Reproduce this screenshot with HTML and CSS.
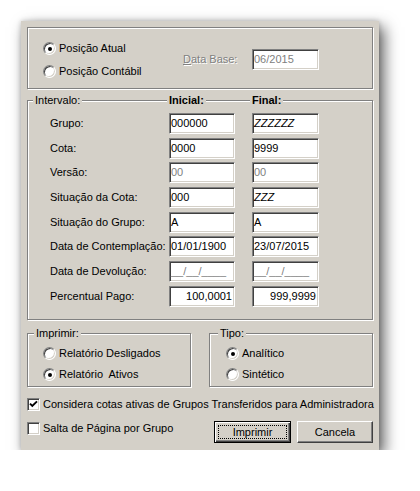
FILE: index.html
```html
<!DOCTYPE html>
<html lang="pt">
<head>
<meta charset="utf-8">
<title>Relatório</title>
<link rel="stylesheet" href="styles.css">
</head>
<body>
<div class="dialog">
  <div class="group g-pos">
    <div class="radios pos-radios">
      <label class="opt"><span class="radio on"></span>Posição Atual</label>
      <label class="opt"><span class="radio"></span>Posição Contábil</label>
    </div>
    <span class="etched"><u>D</u>ata Base:</span>
    <span class="field gray">06/2015</span>
  </div>

  <div class="group g-int">
    <div class="cap-row int-caps">
      <span class="cap c-int">Intervalo:</span>
      <span class="cap bold">Inicial:</span>
      <span class="cap bold">Final:</span>
    </div>
    <div class="int-rows">
      <span class="lbl">Grupo:</span><span class="field ini">000000</span><span class="field it">ZZZZZZ</span>
      <span class="lbl">Cota:</span><span class="field ini">0000</span><span class="field">9999</span>
      <span class="lbl">Versão:</span><span class="field ini gray">00</span><span class="field gray">00</span>
      <span class="lbl">Situação da Cota:</span><span class="field ini">000</span><span class="field it">ZZZ</span>
      <span class="lbl">Situação do Grupo:</span><span class="field ini">A</span><span class="field">A</span>
      <span class="lbl">Data de Contemplação:</span><span class="field ini">01/01/1900</span><span class="field">23/07/2015</span>
      <span class="lbl">Data de Devolução:</span><span class="field ini gray">__/__/____</span><span class="field gray">__/__/____</span>
      <span class="lbl">Percentual Pago:</span><span class="field ini right">100,0001</span><span class="field right">999,9999</span>
    </div>
  </div>

  <div class="bottom-groups">
    <div class="group g-small">
      <div class="cap-row"><span class="cap c-imp">Imprimir:</span></div>
      <div class="radios small-radios r-imp">
        <label class="opt"><span class="radio"></span>Relatório Desligados</label>
        <label class="opt"><span class="radio on"></span>Relatório  Ativos</label>
      </div>
    </div>
    <div class="group g-small">
      <div class="cap-row"><span class="cap c-tipo">Tipo:</span></div>
      <div class="radios small-radios r-tipo">
        <label class="opt"><span class="radio on"></span>Analítico</label>
        <label class="opt"><span class="radio"></span>Sintético</label>
      </div>
    </div>
  </div>

  <label class="opt chk-row"><span class="chk"><svg viewBox="0 0 11 11" width="11" height="11"><path d="M2 4.6 L4.3 7 L9 2.3" fill="none" stroke="#000" stroke-width="1.9"/></svg></span>Considera cotas ativas de Grupos Transferidos para Administradora</label>

  <div class="bottom-row">
    <label class="opt chk-row2"><span class="chk"></span>Salta de Página por Grupo</label>
    <button class="btn default" type="button">Imprimir</button>
    <button class="btn" type="button">Cancela</button>
  </div>
</div>
</body>
</html>
```
FILE: styles.css
```css
body {
  margin: 0;
  background: #fff;
  font-family: "Liberation Sans", Arial, sans-serif;
  font-size: 11px;
  color: #000;
}

.dialog {
  margin: 21px 0 0 21px;
  width: 358px;
  height: 429px;
  box-sizing: border-box;
  background: #d4d0c8;
  padding: 6px;
  box-shadow: 5px 6px 14px rgba(0, 0, 0, 0.62), 0 0 5px rgba(0, 0, 0, 0.2);
}

.group {
  box-sizing: border-box;
  border: 1px solid #808080;
  box-shadow: 1px 1px 0 #fff, inset 1px 1px 0 #fff;
}

/* posição */
.g-pos {
  height: 62px;
  display: flex;
  align-items: flex-start;
  padding: 14px 0 0 15px;
}

.radios {
  display: flex;
  flex-direction: column;
}

.pos-radios {
  width: 140px;
  gap: 10px;
}

.opt {
  display: flex;
  align-items: center;
  gap: 3px;
  height: 13px;
  line-height: 13px;
  white-space: pre;
}

.radio {
  box-sizing: border-box;
  width: 13px;
  height: 13px;
  flex: none;
  border-radius: 50%;
  border: 1px solid;
  border-color: #808080 #fff #fff #808080;
  box-shadow: inset 1px 1px 0 #404040, inset -1px -1px 0 #d4d0c8;
  background: #fff;
  display: flex;
  align-items: center;
  justify-content: center;
}

.radio.on::after {
  content: "";
  width: 4px;
  height: 4px;
  border-radius: 50%;
  background: #000;
}

.etched {
  width: 69px;
  margin-top: 7px;
  line-height: 21px;
  color: #808080;
  text-shadow: 1px 1px 0 #fff;
}

.field {
  box-sizing: border-box;
  display: block;
  width: 67px;
  height: 21px;
  background: #fff;
  border: 1px solid;
  border-color: #808080 #fff #fff #808080;
  box-shadow: inset 1px 1px 0 #404040, inset -1px -1px 0 #d4d0c8;
  padding: 0 2px 0 1px;
  line-height: 19px;
  white-space: nowrap;
  overflow: hidden;
}

.field.ini {
  width: 66px;
}

.g-pos .field {
  margin-top: 7px;
}

.gray { color: #808080; }
.it { font-style: italic; }
.right { text-align: right; }
.bold { font-weight: bold; }

/* intervalo */
.g-int {
  margin-top: 11px;
  height: 220px;
}

.cap-row {
  display: flex;
  margin-top: -7px;
  height: 13px;
  line-height: 13px;
}

.cap {
  background: #d4d0c8;
  padding: 0 2px;
}

.int-caps {
  display: grid;
  grid-template-columns: 139px 83px auto;
  justify-items: start;
}

.c-int { margin-left: 5px; }

.int-rows {
  display: grid;
  grid-template-columns: 119px 83px 67px;
  grid-auto-rows: 21px;
  justify-items: start;
  row-gap: 3.7px;
  padding-left: 22px;
  margin-top: 6px;
}

.lbl {
  line-height: 21px;
  white-space: nowrap;
}

/* imprimir / tipo */
.bottom-groups {
  display: grid;
  grid-template-columns: 164px 164px;
  column-gap: 18px;
  margin-top: 13px;
}

.g-small {
  height: 54px;
}

.c-imp { margin-left: 6px; }
.c-tipo { margin-left: 8px; }

.small-radios {
  gap: 8px;
  margin-top: 7px;
}

.r-imp { padding-left: 15px; }
.r-tipo { padding-left: 16px; }

/* checkboxes */
.chk {
  box-sizing: border-box;
  width: 13px;
  height: 13px;
  flex: none;
  border: 1px solid;
  border-color: #808080 #fff #fff #808080;
  box-shadow: inset 1px 1px 0 #404040, inset -1px -1px 0 #d4d0c8;
  background: #fff;
}

.chk svg { display: block; }

.chk-row {
  margin-top: 11px;
}

.bottom-row {
  display: flex;
  align-items: flex-start;
  margin-top: 10px;
}

.chk-row2 {
  margin-top: 1px;
}

/* buttons */
.btn {
  box-sizing: border-box;
  height: 22px;
  width: 76px;
  padding: 0;
  font: inherit;
  color: #000;
  background: #d4d0c8;
  border: 1px solid;
  border-color: #fff #404040 #404040 #fff;
  box-shadow: inset -1px -1px 0 #808080;
  margin-left: 6px;
  position: relative;
}

.btn.default {
  width: 77px;
  margin-left: auto;
  border-color: #000;
  box-shadow: inset 1px 1px 0 #fff, inset -1px -1px 0 #404040, inset -2px -2px 0 #808080;
}

.btn.default::after {
  content: "";
  position: absolute;
  left: 3px;
  top: 3px;
  right: 3px;
  bottom: 3px;
  border: 1px dotted #000;
}
```
